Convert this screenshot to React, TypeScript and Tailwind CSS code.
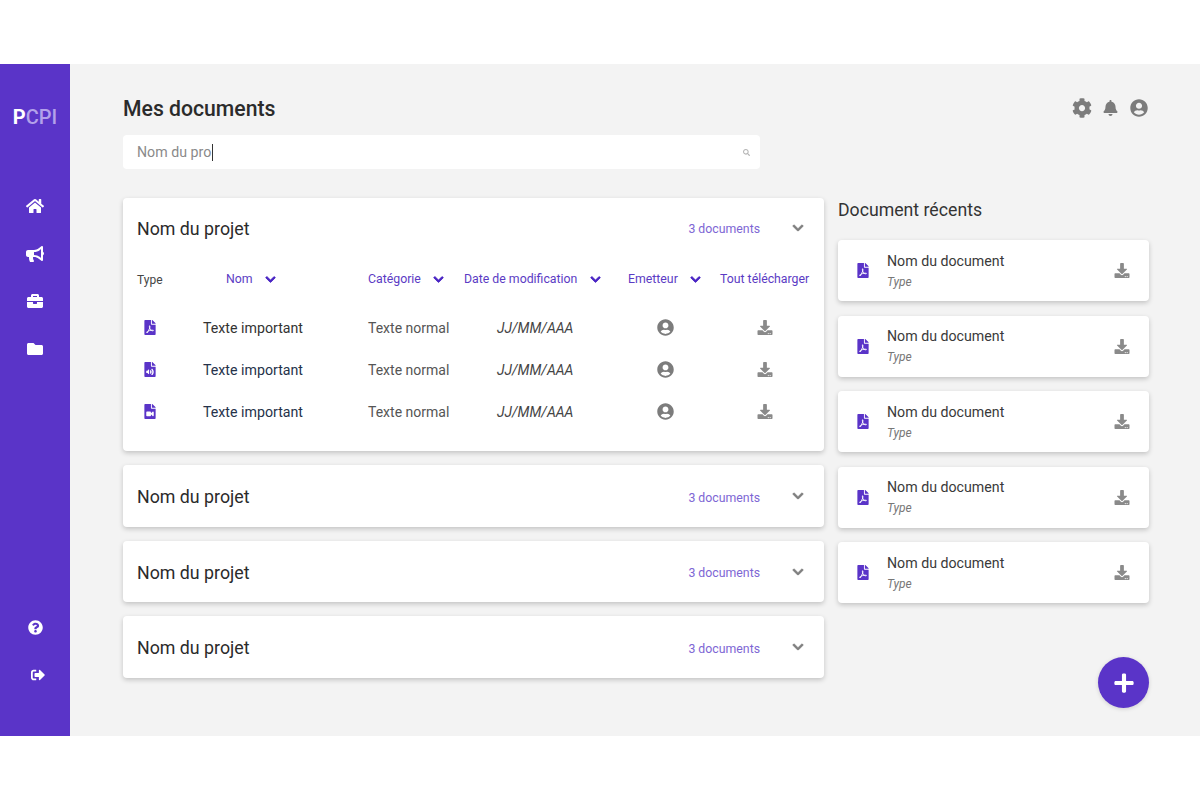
import React from 'react';
import {
  FaBell, FaBriefcase, FaBullhorn, FaChevronDown, FaCog, FaDownload, FaFileAudio, FaFilePdf,
  FaFileVideo, FaFolder, FaHome, FaPlus, FaQuestionCircle, FaSearch, FaSignOutAlt, FaUserCircle,
} from 'react-icons/fa';

const rows = [FaFilePdf, FaFileAudio, FaFileVideo];

const HeaderCell: React.FC<{ label: string; className: string; gap: string }> = ({ label, className, gap }) => (
  <div className={`flex items-center text-[12.3px] text-[#5b3bc4] ${className} ${gap}`}>
    <span>{label}</span>
    <FaChevronDown className="h-[11px] w-[11px] stroke-[40] text-[#4a25c4]" />
  </div>
);

const ProjectHeader: React.FC = () => (
  <div className="flex items-center justify-between">
    <h2 className="text-[17.8px] text-[#2b2b2b]">Nom du projet</h2>
    <div className="flex items-center">
      <span className="text-[12.3px] text-[#7d66d4]">3 documents</span>
      <FaChevronDown className="mt-[-3px] ml-[32px] mr-[6px] h-3 w-3 stroke-[30] text-[#7f7f7f]" />
    </div>
  </div>
);

const App: React.FC = () => {
  return (
    <div className="flex flex-col h-[800px] bg-white font-['Roboto',sans-serif]">
      <div className="h-16" />
      <div className="relative flex h-[672px] bg-[#f3f3f3]">
        <aside className="flex w-[70px] flex-col items-center bg-[#5a34c8] text-white">
          <div className="mt-[41px] text-xl leading-6 font-bold">
            P<span className="font-medium text-[#b3a1ea]">CPI</span>
          </div>
          <nav className="mt-[69px] flex flex-col items-center gap-[31.5px] text-base">
            <FaHome className="h-4 w-[18px]" />
            <FaBullhorn className="h-4 w-[18px]" />
            <FaBriefcase className="h-4 w-4" />
            <FaFolder className="h-4 w-4" />
          </nav>
          <div className="mt-auto mb-[54px] flex flex-col items-center gap-[33px]">
            <FaQuestionCircle className="h-[15px] w-[15px]" />
            <FaSignOutAlt className="ml-[6px] h-[14px] w-[16px]" />
          </div>
        </aside>

        <main className="flex-1 pl-[53px] pr-[51px]">
          <div className="flex items-center justify-between pt-[32px]">
            <h1 className="text-[21.2px] leading-[26px] font-medium text-[#2b2b2b]">Mes documents</h1>
            <div className="mt-[-2px] mr-px flex items-center gap-[11px] text-[#7c7c7c]">
              <FaCog className="h-[20px] w-[20px]" />
              <FaBell className="h-[16px] w-[15px]" />
              <FaUserCircle className="ml-px h-[18px] w-[18px]" />
            </div>
          </div>

          <div className="mt-[13px] flex h-[34px] w-[637px] items-center justify-between rounded bg-white pl-[14px] pr-[10px]">
            <div className="flex items-center pt-px text-[14.2px] text-[#8a8a8a]">
              Nom du pro
              <span className="ml-px h-[17px] w-px bg-[#333333]" />
            </div>
            <FaSearch className="text-[7px] text-[#b5b5b5]" />
          </div>

          <div className="mt-[29px] flex gap-[14px]">
            <div className="flex w-[701px] flex-col gap-[14px]">
              <section className="h-[253px] rounded bg-white px-[14px] shadow-[0_2px_5px_rgba(0,0,0,0.2)]">
                <div className="pt-[18px]">
                  <ProjectHeader />
                </div>
                <div className="mt-[28px] grid grid-cols-[66px_165px_96px_164px_92px_1fr] items-center text-sm">
                  <span className="mt-px text-xs text-[#444444]">Type</span>
                  <HeaderCell label="Nom" className="pl-[23px]" gap="gap-[12px]" />
                  <HeaderCell label="Catégorie" className="" gap="gap-[12px]" />
                  <HeaderCell label="Date de modification" className="" gap="gap-[13px]" />
                  <HeaderCell label="Emetteur" className="" gap="gap-[12px]" />
                  <span className="text-[12.3px] whitespace-nowrap text-[#5b3bc4]">Tout télécharger</span>
                </div>
                <div className="mt-[18px]">
                  {rows.map((Icon, i) => (
                    <div key={i} className="grid h-[42px] grid-cols-[66px_165px_96px_164px_92px_1fr] items-center">
                      <Icon className="ml-[7px] h-[15px] w-[12px] text-[#5a34c8]" />
                      <span className={`pt-[2px] text-[14.2px] leading-5 ${i === 0 ? 'text-[#333333]' : 'text-[#25324a]'}`}>Texte important</span>
                      <span className="pt-[2px] text-sm leading-5 text-[#555555]">Texte normal</span>
                      <span className="pt-[2px] pl-[33px] text-sm leading-5 text-[#444444] italic">JJ/MM/AAA</span>
                      <FaUserCircle className="ml-[29px] h-[17px] w-[17px] text-[#7c7c7c]" />
                      <FaDownload className="ml-[37px] h-[15px] w-[16px] text-[#8a8a8a]" />
                    </div>
                  ))}
                </div>
              </section>
              {[0, 1, 2].map(i => (
                <section key={i} className="flex h-[61.5px] flex-col justify-center rounded bg-white px-[14px] pt-[4px] shadow-[0_2px_5px_rgba(0,0,0,0.2)]">
                  <ProjectHeader />
                </section>
              ))}
            </div>

            <div className="flex w-[311px] flex-col">
              <h2 className="pt-[2px] text-[17.7px] leading-5 text-[#333333]">Document récents</h2>
              <div className="mt-[20px] flex flex-col gap-[14.5px]">
                {[0, 1, 2, 3, 4].map(i => (
                  <div key={i} className="flex h-[61px] items-center rounded bg-white pl-[19px] pr-[19px] shadow-[0_2px_5px_rgba(0,0,0,0.2)]">
                    <FaFilePdf className="h-[15px] w-[12px] text-[#5a34c8]" />
                    <div className="ml-[18px] flex-1">
                      <div className="text-[14.2px] leading-[18px] text-[#3a3a3a]">Nom du document</div>
                      <div className="mt-[4px] text-xs leading-[16px] text-[#777777] italic">Type</div>
                    </div>
                    <FaDownload className="h-[15px] w-[16px] text-[#8a8a8a]" />
                  </div>
                ))}
              </div>
            </div>
          </div>
        </main>

        <button className="absolute right-[51px] bottom-[28px] flex h-[51px] w-[51px] items-center justify-center rounded-full bg-[#5a34c8] text-white shadow-[0_1px_4px_rgba(0,0,0,0.15)]">
          <FaPlus className="h-[22px] w-[22px]" />
        </button>
      </div>
      <div className="h-16" />
    </div>
  );
};

export default App;
